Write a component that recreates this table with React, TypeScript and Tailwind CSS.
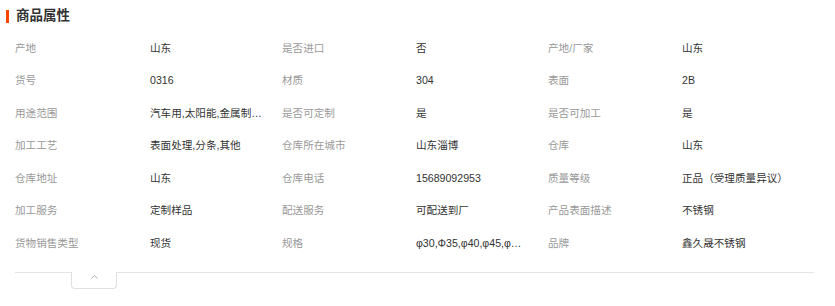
const rows: [string, string, string, string, string, string][] = [
  ['产地', '山东', '是否进口', '否', '产地/厂家', '山东'],
  ['货号', '0316', '材质', '304', '表面', '2B'],
  ['用途范围', '汽车用,太阳能,金属制品,机械设备', '是否可定制', '是', '是否可加工', '是'],
  ['加工工艺', '表面处理,分条,其他', '仓库所在城市', '山东淄博', '仓库', '山东'],
  ['仓库地址', '山东', '仓库电话', '15689092953', '质量等级', '正品（受理质量异议）'],
  ['加工服务', '定制样品', '配送服务', '可配送到厂', '产品表面描述', '不锈钢'],
  ['货物销售类型', '现货', '规格', 'φ30,Φ35,φ40,φ45,φ50,φ60', '品牌', '鑫久晟不锈钢'],
];

export default function App() {
  return (
    <div
      className="w-[835px] h-[306px] bg-white overflow-hidden"
      style={{ fontFamily: '"Liberation Sans", "Noto Sans CJK SC", sans-serif' }}
    >
      {/* Header */}
      <div className="flex items-center h-[33px] pl-[6px] pb-[1px]">
        <div className="w-[3px] h-[13px] bg-[#ff4400]" />
        <h2 className="ml-[7px] text-[13.5px] font-bold text-[#333] leading-none">商品属性</h2>
      </div>

      {/* Attributes */}
      <div className="pl-[15px] pr-[21px] -mt-[1px]">
        {rows.map((r, i) => (
          <div
            key={i}
            className="grid grid-cols-[135px_132px_134px_132px_134px_1fr] h-[32.5px] items-center text-[10.6px] leading-none"
          >
            <div className="text-[#999] truncate pr-[10px]">{r[0]}</div>
            <div className="text-[#333] truncate pr-[15px]">{r[1]}</div>
            <div className="text-[#999] truncate pr-[10px]">{r[2]}</div>
            <div className="text-[#333] truncate pr-[22px]">{r[3]}</div>
            <div className="text-[#999] truncate pr-[10px]">{r[4]}</div>
            <div className="text-[#333] truncate">{r[5]}</div>
          </div>
        ))}
      </div>

      {/* Collapse bar */}
      <div className="relative mt-[12px] ml-[15px] mr-[21px] border-t border-[#e5e5e5]">
        <button className="absolute left-[56px] top-[-1px] w-[46px] h-[17px] bg-white border-x border-b border-[#e0e0e0] rounded-b-[4px] flex justify-center pt-[3px]">
          <svg width="7" height="4" viewBox="0 0 7 4" fill="none">
            <polyline points="0.5,3.5 3.5,0.5 6.5,3.5" stroke="#aaa" strokeWidth="1" />
          </svg>
        </button>
      </div>
    </div>
  );
}
